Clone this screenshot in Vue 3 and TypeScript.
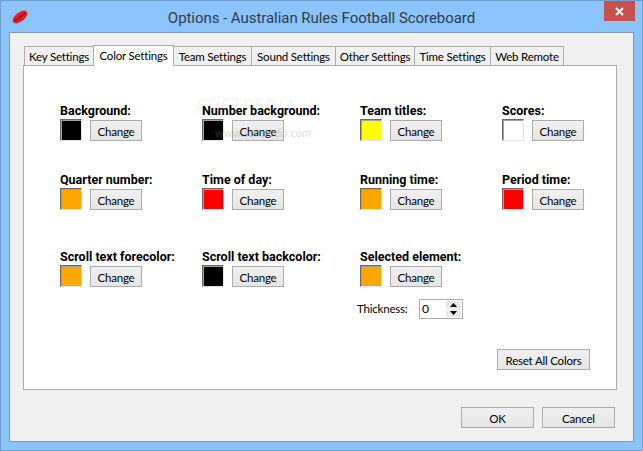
<script setup lang="ts">
interface Item { label: string; color: string }
const tabs: string[] = ['Key Settings', 'Color Settings', 'Team Settings', 'Sound Settings', 'Other Settings', 'Time Settings', 'Web Remote']
const items: Item[] = [
  { label: 'Background:', color: '#000000' },
  { label: 'Number background:', color: '#000000' },
  { label: 'Team titles:', color: '#ffff00' },
  { label: 'Scores:', color: '#ffffff' },
  { label: 'Quarter number:', color: '#ffa500' },
  { label: 'Time of day:', color: '#ff0000' },
  { label: 'Running time:', color: '#ffa500' },
  { label: 'Period time:', color: '#ff0000' },
  { label: 'Scroll text forecolor:', color: '#ffa500' },
  { label: 'Scroll text backcolor:', color: '#000000' },
  { label: 'Selected element:', color: '#ffa500' },
]
</script>

<template>
  <div class="window">
    <header class="titlebar">
      <svg class="logo" width="18" height="16" viewBox="0 0 18 16">
        <ellipse cx="9" cy="8" rx="8.6" ry="4.6" transform="rotate(-38 9 8)" fill="#f01c1c" />
        <path d="M4 12 L14 4" stroke="#5a1030" stroke-width="1.2" />
      </svg>
      <span class="title">Options - Australian Rules Football Scoreboard</span>
      <span class="close">
        <svg width="9" height="9" viewBox="0 0 9 9"><path d="M1 1 L8 8 M8 1 L1 8" stroke="#fff" stroke-width="2" /></svg>
      </span>
    </header>
    <main class="client">
      <nav class="tabs">
        <span v-for="(t, i) in tabs" :key="t" class="tab" :class="['tab' + i, { active: i === 1 }]">{{ t }}</span>
      </nav>
      <section class="panel">
        <div class="wm wm1">SOFTPEDIA</div>
        <div class="grid">
          <div v-for="it in items" :key="it.label" class="cell">
            <div class="label">{{ it.label }}</div>
            <div class="controls">
              <span class="swatch" :style="{ background: it.color }"></span>
              <button class="btn change">Change</button>
            </div>
          </div>
        </div>
        <div class="thickness">
          <span class="thick-label">Thickness:</span>
          <span class="spin">
            <span class="val">0</span>
            <span class="arrows">
              <span class="arrow"><svg width="7" height="4" viewBox="0 0 7 4"><path d="M3.5 0 L7 4 H0 Z" fill="#000" /></svg></span>
              <span class="arrow"><svg width="7" height="4" viewBox="0 0 7 4"><path d="M0 0 H7 L3.5 4 Z" fill="#000" /></svg></span>
            </span>
          </span>
        </div>
        <div class="reset-row"><button class="btn reset">Reset All Colors</button></div>
        <div class="wm wm2">www.softpedia.com</div>
      </section>
      <footer class="footer">
        <button class="btn dlg">OK</button>
        <button class="btn dlg">Cancel</button>
      </footer>
    </main>
  </div>
</template>

<style>
html, body { margin: 0; background: #8ac4fb; }
</style>

<style scoped>
.window {
  width: 643px;
  height: 451px;
  box-sizing: border-box;
  background: #8ac4fb;
  border: 1px solid #6f9fd0;
  padding: 0 8px 8px;
  display: flex;
  flex-direction: column;
  font-family: Lato, Roboto, sans-serif;
  font-size: 11.5px;
  letter-spacing: -0.2px;
  color: #000;
  overflow: hidden;
}
.titlebar {
  height: 31px;
  flex: none;
  position: relative;
  display: flex;
  align-items: center;
  justify-content: center;
}
.logo { position: absolute; left: 2px; top: 8px; }
.title {
  font-family: Roboto, sans-serif;
  font-size: 15px;
  letter-spacing: -0.05px;
  color: #2f3d4d;
  padding-top: 2px;
}
.close {
  position: absolute;
  right: -1px;
  top: 0;
  width: 31px;
  height: 20px;
  background: #c75050;
  display: flex;
  align-items: center;
  justify-content: center;
}
.client {
  flex: 1;
  background: #f0f0f0;
  border: 1px solid #7a9cc0;
  padding: 12px 16px 13px 13px;
  display: flex;
  flex-direction: column;
  min-height: 0;
}
.tabs {
  display: flex;
  align-items: flex-end;
  height: 21px;
  padding-left: 1px;
  position: relative;
  z-index: 1;
  margin-bottom: -1px;
}
.tab {
  box-sizing: border-box;
  height: 19px;
  border: 1px solid #acacac;
  border-bottom: none;
  margin-right: -1px;
  background: #f0f0f0;
  line-height: 20px;
  text-align: center;
  white-space: nowrap;
  margin-bottom: 1px;
}
.tab.active {
  height: 21px;
  background: #fff;
  margin-bottom: 0;
  line-height: 19px;
  z-index: 2;
}
.tab0 { width: 70px; }
.tab1 { width: 81px; }
.tab2 { width: 79px; }
.tab3 { width: 85px; }
.tab4 { width: 80px; }
.tab5 { width: 77px; }
.tab6 { width: 74px; }
.panel {
  position: relative;
  height: 325px;
  box-sizing: border-box;
  background: #fff;
  border: 1px solid #acacac;
  padding: 37px 0 0 36px;
}
.grid {
  position: relative;
  display: grid;
  grid-template-columns: 142px 158px 142px 1fr;
  grid-template-rows: 69px 77px auto;
}
.label {
  font-family: Roboto, sans-serif;
  font-weight: 700;
  font-size: 12.5px;
  letter-spacing: 0;
  line-height: 16px;
  height: 16px;
  white-space: nowrap;
}
.controls { display: flex; align-items: flex-start; gap: 8px; }
.swatch {
  box-sizing: border-box;
  width: 22px;
  height: 22px;
  border: 1px solid;
  border-color: #696969 #e3e3e3 #e3e3e3 #696969;
  box-shadow: inset 1px 1px 0 #a0a0a0;
}
.btn {
  box-sizing: border-box;
  font: inherit;
  letter-spacing: inherit;
  color: #000;
  padding: 1px 0 0;
  background: linear-gradient(#f0f0f0, #e5e5e5);
  border: 1px solid #acacac;
  white-space: nowrap;
}
.change { width: 52px; height: 21px; margin-top: 1px; }
.thickness {
  display: flex;
  align-items: center;
  margin: 12px 0 0 297px;
  height: 20px;
}
.thick-label { width: 62px; padding-bottom: 1px; }
.spin {
  box-sizing: border-box;
  width: 44px;
  height: 20px;
  border: 1px solid #acacac;
  background: #fff;
  display: flex;
  justify-content: space-between;
  padding: 1px;
}
.val { padding-left: 1px; line-height: 16px; font-size: 12px; }
.arrows { width: 15px; display: flex; flex-direction: column; gap: 1px; }
.arrow {
  flex: 1;
  background: #e8e8e8;
  display: flex;
  align-items: center;
  justify-content: center;
}
.reset-row { display: flex; justify-content: flex-end; margin: 30px 26px 0 0; }
.reset { width: 93px; height: 21px; }
.wm { position: absolute; pointer-events: none; white-space: nowrap; }
.wm1 { left: 173px; top: 30px; font-family: Roboto, sans-serif; font-size: 15px; letter-spacing: 2.5px; color: #f3f3f3; }
.wm2 { left: 191px; top: 60px; font-size: 11px; letter-spacing: 0; color: rgba(150, 150, 150, 0.35); }
.footer {
  display: flex;
  justify-content: flex-end;
  gap: 8px;
  margin-top: 17px;
  padding-right: 2px;
}
.dlg { width: 73px; height: 21px; }
</style>
